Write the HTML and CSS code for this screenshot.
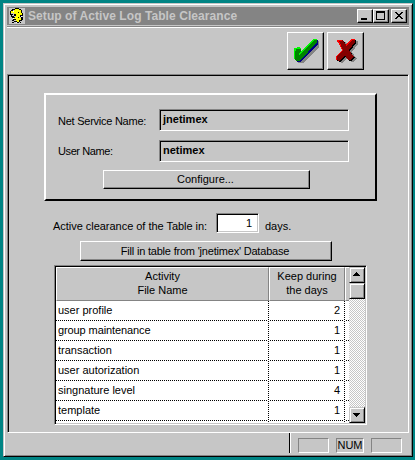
FILE: index.html
```html
<!DOCTYPE html>
<html lang="en">
<head>
<meta charset="utf-8">
<title>Setup of Active Log Table Clearance</title>
<link rel="stylesheet" href="styles.css">
</head>
<body>
<div class="window">
  <header class="titlebar">
    <svg class="app-icon" width="16" height="16" viewBox="0 0 16 16" shape-rendering="crispEdges">
      <rect width="16" height="16" fill="#c6c6c6"/>
      <path fill="#ffff00" d="M6 1h4v1h2v3h1v2h-2v3h1v2h-2v2H8v-1H7v-2H5V9h2V6H5V5H2V3h3V2h1z"/>
      <path fill="#000" d="M6 0h4v1H6zM3 1h3v1H4v1H2V2h1zM10 1h2v1h-2zM12 2h1v3h-1zM1 3h1v3H1zM1 6h3v1H1zM2 7h1v2H2zM3 8h2v1h1v1H3zM13 5h1v3h-1zM11 7h2v1h-2zM5 6h2v2H5zM12 9h2v3h-2zM11 8h1v1h-1zM4 11h3v1H4zM3 12h2v1H3zM5 13h3v1H5zM10 12h3v1h-2v1h-1zM3 14h2v1H3zM8 14h2v1H8zM11 14h1v1h-1zM9 4h1v1H9zM9 9h1v1H9z"/>
      <path fill="#fff" d="M4 3h1v1H4zM4 10h1v1H4zM12 8h1v1h-1zM7 14h1v1H7z"/>
    </svg>
    <h1 class="title">Setup of Active Log Table Clearance</h1>
    <div class="caption-buttons">
      <button class="caption" aria-label="Minimize"><svg width="14" height="12" shape-rendering="crispEdges"><path d="M3 8h6v2H3z"/></svg></button>
      <button class="caption" aria-label="Maximize"><svg width="14" height="12" shape-rendering="crispEdges"><path fill-rule="evenodd" d="M2 1h9v9H2zM3 3v6h7V3z"/></svg></button>
      <button class="caption close" aria-label="Close"><svg width="14" height="12" shape-rendering="crispEdges"><path d="M3 2h2v1h1v1h2V3h1V2h2v1h-1v1H9v1H8v1h1v1h1v1h1v1H9V8H8V7H6v1H5v1H3V8h1V7h1V6h1V5H5V4H4V3H3z"/></svg></button>
    </div>
  </header>
  <div class="toolbar">
    <button class="tool" aria-label="OK">
      <svg width="35" height="36" viewBox="0 0 35 36" shape-rendering="crispEdges">
        <path fill="#848484" d="M9 18h5v3L28 8h3v6L15 30h-5l-2-3z"/>
        <path fill="#000084" d="M7 16h5v4L26 7h4v4L13 29h-3l-3-2z"/>
        <path fill="#008400" d="M6 15l5-1 2 1v4L25 6h4v3L12 28H9l-3-2z"/>
        <path fill="#00f700" d="M6 15l5-1 2 1v1H8v2H7v8H6zM13 18L25 6h4v1h-3L13 20l-2 2v-2z"/>
      </svg>
    </button>
    <button class="tool" aria-label="Cancel">
      <svg width="35" height="36" viewBox="0 0 35 36" shape-rendering="crispEdges">
        <path fill="#848484" transform="translate(3 2)" d="M9 7h6l3 5 5-6h4v3l-6 8 5 7-4 3h-2l-3-5-5 6-4-1v-4l6-6-3-6-2-2z"/>
        <path fill="#000" transform="translate(1 1)" d="M9 7h6l3 5 5-6h4v3l-6 8 5 7-4 3h-2l-3-5-5 6-4-1v-4l6-6-3-6-2-2z"/>
        <path fill="#840000" d="M9 7h6l3 5 5-6h4v3l-6 8 5 7-4 3h-2l-3-5-5 6-4-1v-4l6-6-3-6-2-2z"/>
        <path fill="#ff0000" d="M9 7h5v1h-3l4 9-6 7v3H8v-4l6-6-3-6-2-2zM18 12l5-6h4v1h-3l-6 7z"/>
      </svg>
    </button>
  </div>
  <main class="client">
    <section class="group">
      <div class="line">
        <span class="label"><span class="t-net">Net Service Name:</span></span>
        <div class="field"><span>jnetimex</span></div>
      </div>
      <div class="line second">
        <span class="label"><span class="t-user">User Name:</span></span>
        <div class="field"><span>netimex</span></div>
      </div>
      <button class="push configure"><span>Configure...</span></button>
    </section>
    <div class="clearance">
      <span class="t-active">Active clearance of the Table in:</span>
      <div class="number">1</div>
      <span>days.</span>
    </div>
    <button class="push fill"><span class="t-fill">Fill in table from 'jnetimex' Database</span></button>
    <section class="grid">
      <div class="table">
        <div class="head">
          <div class="th"><span>Activity</span><span>File Name</span></div>
          <div class="th"><span>Keep during</span><span>the days</span></div>
          <div class="th last"></div>
        </div>
        <div class="row"><div>user profile</div><div>2</div><div></div></div>
        <div class="row"><div class="tight">group maintenance</div><div>1</div><div></div></div>
        <div class="row"><div>transaction</div><div>1</div><div></div></div>
        <div class="row"><div>user autorization</div><div>1</div><div></div></div>
        <div class="row"><div>singnature level</div><div>4</div><div></div></div>
        <div class="row"><div>template</div><div>1</div><div></div></div>
        <div class="row rest"><div></div><div></div><div></div></div>
      </div>
      <div class="scrollbar">
        <div class="sb"><svg width="13" height="13" shape-rendering="crispEdges"><path d="M6 4h1v1h1v1h1v1h1v1H3V7h1V6h1V5h1z"/></svg></div>
        <div class="sb"></div>
        <div class="track"></div>
        <div class="sb"><svg width="13" height="13" shape-rendering="crispEdges"><path d="M3 5h7v1H9v1H8v1H7v1H6V8H5V7H4V6H3z"/></svg></div>
      </div>
    </section>
  </main>
  <footer class="status">
    <div class="divider"></div>
    <div class="pane"></div>
    <div class="pane num"><span>NUM</span></div>
    <div class="pane"></div>
  </footer>
</div>
</body>
</html>
```
FILE: styles.css
```css
* { box-sizing: border-box; }
body {
  margin: 0;
  padding: 3px;
  height: 460px;
  overflow: hidden;
  background: #008484;
  color: #000;
  font: 11px/13px "Liberation Sans", Arial, sans-serif;
}
svg { display: block; }
span { white-space: nowrap; }
button { font: inherit; color: inherit; padding: 0; border-radius: 0; }

.window {
  width: 410px;
  height: 454px;
  padding: 2px;
  background: #c6c6c6;
  border: 1px solid;
  border-color: #c6c6c6 #000 #000 #c6c6c6;
  box-shadow: inset 1px 1px #fff, inset -1px -1px #848484;
  display: flex;
  flex-direction: column;
}
.titlebar {
  margin: 1px 1px 0;
  height: 18px;
  flex: none;
  background: #848484;
  display: flex;
  align-items: center;
  padding: 0 2px;
}
.app-icon { flex: none; margin-right: 3px; }
.title {
  margin: 0;
  font-size: 12px;
  line-height: 18px;
  font-weight: bold;
  color: #c6c6c6;
  white-space: nowrap;
  letter-spacing: 0.07px;
}
.caption-buttons { margin-left: auto; display: flex; }
.caption {
  width: 16px;
  height: 14px;
  background: #c6c6c6;
  border: 1px solid;
  border-color: #fff #000 #000 #fff;
  box-shadow: inset -1px -1px #848484;
}
.caption.close { margin-left: 2px; }

.toolbar {
  flex: none;
  height: 48px;
  margin: 1px 1px 0;
  border-top: 1px solid #848484;
  box-shadow: inset 0 1px #fff;
  padding: 5px 0 0 280px;
  display: flex;
  gap: 3px;
}
.tool {
  width: 37px;
  height: 38px;
  background: #c6c6c6;
  border: 1px solid;
  border-color: #fff #000 #000 #fff;
  box-shadow: inset -1px -1px #848484;
}

.client {
  flex: none;
  width: 402px;
  height: 359px;
  margin-left: 1px;
  border: 1px solid;
  border-color: #848484 #fff #fff #848484;
  box-shadow: inset 1px 1px #000;
}
.group {
  width: 333px;
  height: 108px;
  margin: 18px 0 0 36px;
  border: 2px solid;
  border-color: #fff #000 #000 #fff;
  padding: 14px 0 0 12px;
}
.line { display: flex; }
.line.second { margin-top: 9px; }
.label { width: 101px; padding-top: 6px; }
.second .label { padding-top: 5px; }
.field {
  width: 190px;
  height: 22px;
  border: 1px solid;
  border-color: #848484 #fff #fff #848484;
  box-shadow: inset 1px 1px #000;
  padding: 3px;
  font-weight: bold;
}
.push {
  display: block;
  background: #c6c6c6;
  border: 1px solid;
  border-color: #fff #000 #000 #fff;
  box-shadow: inset -1px -1px #848484;
  text-align: center;
}
.configure { width: 207px; height: 19px; margin: 8px 0 0 45px; padding-right: 2px; }
.clearance { display: flex; height: 20px; margin: 12px 0 0 45px; }
.clearance > span { padding-top: 7px; }
.t-active { width: 163px; letter-spacing: -0.03px; }
.number {
  width: 43px;
  height: 20px;
  background: #fff;
  border: 1px solid;
  border-color: #848484 #fff #fff #848484;
  box-shadow: inset 1px 1px #000, inset -1px -1px #c6c6c6;
  padding: 3px 6px 0 0;
  text-align: right;
  margin-right: 6px;
}
.fill { width: 252px; height: 20px; margin: 8px 0 0 72px; padding-right: 2px; }
.t-net { letter-spacing: -0.25px; }
.t-user { letter-spacing: -0.4px; }
.t-fill { letter-spacing: -0.2px; }
.tight { letter-spacing: -0.1px; }

.grid {
  width: 313px;
  height: 160px;
  margin: 4px 0 0 46px;
  padding: 1px;
  border: 1px solid;
  border-color: #848484 #fff #fff #848484;
  box-shadow: inset 1px 1px #000, inset -1px -1px #c6c6c6;
  display: flex;
}
.table { width: 293px; }
.head, .row { display: grid; grid-template-columns: 213px 76px 4px; }
.head { height: 34px; }
.th {
  border: 1px solid;
  border-color: #fff #848484 #848484 #fff;
  display: flex;
  flex-direction: column;
  align-items: center;
  line-height: 14px;
  padding-top: 1px;
}
.th.last { border-right: 0; }
.row {
  height: 20px;
  background:
    repeating-linear-gradient(90deg, #000 0 1px, #fff 1px 2px) 0 19px / 100% 1px no-repeat #fff;
}
.row > div {
  padding: 3px 5px 0 2px;
  background: repeating-linear-gradient(#000 0 1px, #fff 1px 2px) 100% 0 / 1px 100% no-repeat;
}
.row > div:nth-child(2) { text-align: right; }
.row > div:last-child { background: none; padding: 0; }
.row.rest { height: 2px; background: #fff; overflow: hidden; }
.row.rest > div { padding: 0; }
.scrollbar { width: 16px; display: flex; flex-direction: column; }
.sb {
  flex: none;
  width: 16px;
  height: 16px;
  background: #c6c6c6;
  border: 1px solid;
  border-color: #c6c6c6 #000 #000 #c6c6c6;
  box-shadow: inset 1px 1px #fff, inset -1px -1px #848484;
}
.track { flex: 1; background: repeating-conic-gradient(#fff 0 25%, #c6c6c6 0 50%) 0 0 / 2px 2px; }

.status { flex: none; height: 20px; display: flex; padding-left: 283px; }
.divider { width: 2px; height: 20px; border-left: 1px solid #000; border-right: 1px solid #fff; margin-right: 7px; }
.pane {
  width: 31px;
  height: 15px;
  margin: 5px 7px 0 0;
  border: 1px solid;
  border-color: #848484 #fff #fff #848484;
}
.pane.num { width: 28px; text-align: center; }
```
